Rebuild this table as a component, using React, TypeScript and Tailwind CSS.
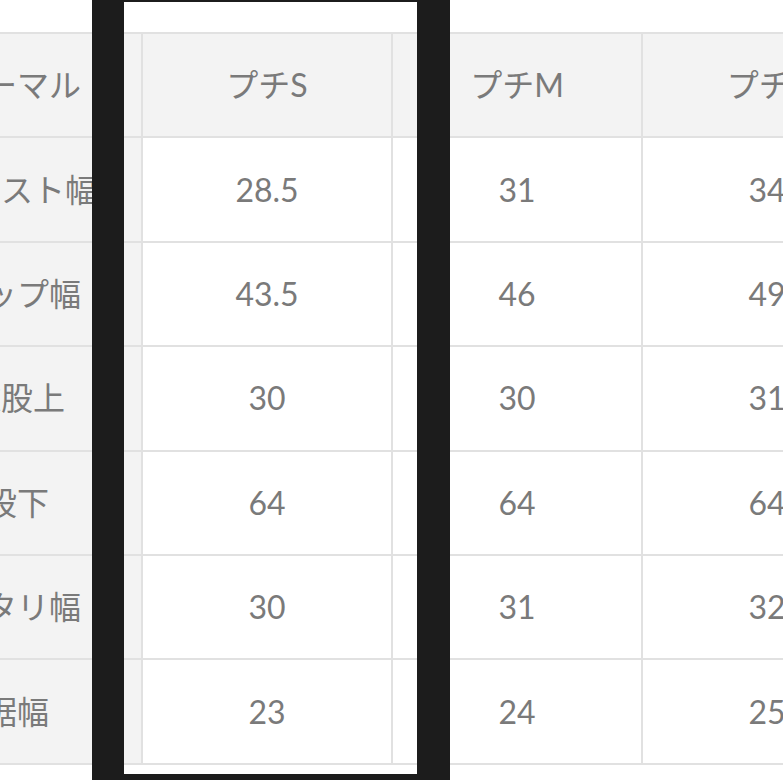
import React from "react"

const header = ["ノーマル", "プチS", "プチM", "プチL"]

const rows: string[][] = [
  ["ウエスト幅", "28.5", "31", "34"],
  ["ヒップ幅", "43.5", "46", "49"],
  ["総股上", "30", "30", "31"],
  ["股下", "64", "64", "64"],
  ["ワタリ幅", "30", "31", "32"],
  ["裾幅", "23", "24", "25"],
]

const font = { fontFamily: "Lato, 'Noto Sans CJK JP', sans-serif" }

function Cell({ text, shaded }: { text: string; shaded?: boolean }) {
  return (
    <div
      className={`flex h-[102.4px] items-center justify-center whitespace-nowrap text-[32px] font-normal leading-none text-[#7a7a7a] ${
        shaded ? "bg-[#f3f3f3]" : "bg-white"
      }`}
    >
      {text}
    </div>
  )
}

export default function App() {
  return (
    <div className="relative h-[783px] w-[783px] overflow-hidden bg-white" style={font}>
      <div className="ml-[-109px] mt-[32px] grid w-max grid-cols-[248px_248px_248px_248px] gap-[2px] bg-[#e1e1e1] p-[2px]">
        {header.map((h) => (
          <Cell key={h} text={h} shaded />
        ))}
        {rows.map((r) =>
          r.map((v, i) => <Cell key={r[0] + i} text={v} shaded={i === 0} />)
        )}
      </div>

      {/* highlight frame drawn over the プチS column */}
      <div className="pointer-events-none absolute left-[92px] top-0 h-[780px] w-[358px] border-b-[6px] border-l-[32px] border-r-[33px] border-t-[2px] border-[#1c1c1c]" />
    </div>
  )
}
